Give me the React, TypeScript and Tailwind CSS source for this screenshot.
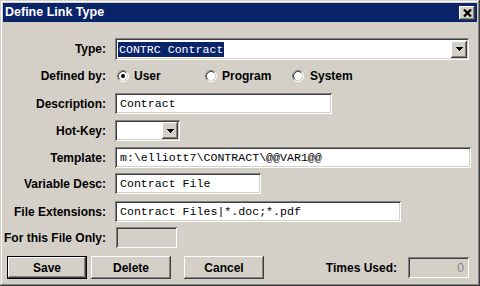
import React from 'react';

const sunken =
  'shadow-[inset_1px_1px_0_#808080,inset_-1px_-1px_0_#ffffff,inset_2px_2px_0_#404040,inset_-2px_-2px_0_#d4d0c8]';
const raised =
  'shadow-[inset_-1px_-1px_0_#404040,inset_1px_1px_0_#ffffff,inset_-2px_-2px_0_#808080,inset_2px_2px_0_#d4d0c8]';
const frame =
  'shadow-[inset_-1px_-1px_0_#404040,inset_1px_1px_0_#d4d0c8,inset_-2px_-2px_0_#808080,inset_2px_2px_0_#ffffff]';

const labelFont = "font-['Liberation_Sans',Arial,sans-serif] font-bold text-[12px] text-black";
const monoFont = "font-['Liberation_Mono','Courier_New',monospace] text-[11.6px] text-black";

const DownArrow = () => (
  <svg width="7" height="4" viewBox="0 0 7 4" shapeRendering="crispEdges">
    <rect x="0" y="0" width="7" height="1" fill="#000" />
    <rect x="1" y="1" width="5" height="1" fill="#000" />
    <rect x="2" y="2" width="3" height="1" fill="#000" />
    <rect x="3" y="3" width="1" height="1" fill="#000" />
  </svg>
);

const DropButton = () => (
  <div className={`w-[16px] h-[17px] bg-[#d4d0c8] flex items-center justify-center ${raised}`}>
    <DownArrow />
  </div>
);

const Radio = ({ checked }: { checked?: boolean }) => (
  <svg width="12" height="12" viewBox="0 0 12 12">
    <circle cx="6" cy="6" r="4.5" fill="#fff" />
    <path d="M2.11 9.89 A5.5 5.5 0 0 1 9.89 2.11" stroke="#808080" strokeWidth="1" fill="none" />
    <path d="M9.89 2.11 A5.5 5.5 0 0 1 2.11 9.89" stroke="#ffffff" strokeWidth="1" fill="none" />
    <path d="M2.82 9.18 A4.5 4.5 0 0 1 9.18 2.82" stroke="#404040" strokeWidth="1" fill="none" />
    <path d="M9.18 2.82 A4.5 4.5 0 0 1 2.82 9.18" stroke="#d4d0c8" strokeWidth="1" fill="none" />
    {checked && <circle cx="6" cy="6" r="2" fill="#000" />}
  </svg>
);

const Label = ({ children }: { children: React.ReactNode }) => (
  <div className={`w-[103px] shrink-0 text-right ${labelFont}`}>{children}</div>
);

const Field = ({ width, value }: { width: string; value: string }) => (
  <div className={`${width} h-[21px] ml-[9px] bg-white flex items-center pl-[5px] ${sunken}`}>
    <span className={`${monoFont} whitespace-pre`}>{value}</span>
  </div>
);

const WinButton = ({ label, isDefault }: { label: string; isDefault?: boolean }) =>
  isDefault ? (
    <div className="w-[80px] h-[23px] border border-black">
      <div className={`w-full h-full bg-[#d4d0c8] flex items-center justify-center ${raised} ${labelFont}`}>
        {label}
      </div>
    </div>
  ) : (
    <div className={`w-[80px] h-[23px] bg-[#d4d0c8] flex items-center justify-center ${raised} ${labelFont}`}>
      {label}
    </div>
  );

export default function App() {
  return (
    <div className={`w-[480px] h-[286px] bg-[#d4d0c8] p-[3px] flex flex-col ${frame}`}>
      {/* Title bar */}
      <div className="h-[19px] bg-[#0a246a] flex items-center justify-between pl-[2px] pr-[2px]">
        <span className="font-['Liberation_Sans',Arial,sans-serif] font-bold text-[12.5px] text-white">
          Define Link Type
        </span>
        <div className={`w-[16px] h-[14px] bg-[#d4d0c8] flex items-center justify-center ${raised}`}>
          <svg width="9" height="8" viewBox="0 0 9 8">
            <path d="M1 0.5 L8 7.5 M8 0.5 L1 7.5" stroke="#000" strokeWidth="2.2" />
          </svg>
        </div>
      </div>

      {/* Type */}
      <div className="flex items-center mt-[16px]">
        <Label>Type:</Label>
        <div className={`w-[354px] h-[22px] ml-[9px] bg-white flex items-center justify-between pl-[3px] pr-[2px] ${sunken}`}>
          <span className={`${monoFont} bg-[#0a246a] text-white leading-[15px] px-[1px] whitespace-pre`}>
            CONTRC Contract
          </span>
          <DropButton />
        </div>
      </div>

      {/* Defined by */}
      <div className="flex items-center h-[20px] mt-[6px]">
        <Label>Defined by:</Label>
        <div className="flex items-center ml-[11px]">
          <div className="w-[88px] flex items-center gap-[5px]">
            <Radio checked />
            <span className={labelFont}>User</span>
          </div>
          <div className="w-[87px] flex items-center gap-[5px]">
            <Radio />
            <span className={labelFont}>Program</span>
          </div>
          <div className="flex items-center gap-[6px]">
            <Radio />
            <span className={labelFont}>System</span>
          </div>
        </div>
      </div>

      {/* Description */}
      <div className="flex items-center mt-[7px]">
        <Label>Description:</Label>
        <Field width="w-[217px]" value="Contract" />
      </div>

      {/* Hot-Key */}
      <div className="flex items-center mt-[6px]">
        <Label>Hot-Key:</Label>
        <div className={`w-[65px] h-[21px] ml-[9px] bg-white flex items-center justify-end pr-[2px] ${sunken}`}>
          <DropButton />
        </div>
      </div>

      {/* Template */}
      <div className="flex items-center mt-[6px]">
        <Label>Template:</Label>
        <Field width="w-[356px]" value={'m:\\elliott7\\CONTRACT\\@@VAR1@@'} />
      </div>

      {/* Variable Desc */}
      <div className="flex items-center mt-[5px]">
        <Label>Variable Desc:</Label>
        <Field width="w-[146px]" value="Contract File" />
      </div>

      {/* File Extensions */}
      <div className="flex items-center mt-[7px]">
        <Label>File Extensions:</Label>
        <Field width="w-[286px]" value="Contract Files|*.doc;*.pdf" />
      </div>

      {/* For this File Only */}
      <div className="flex items-center mt-[5px]">
        <Label>For this File Only:</Label>
        <div className={`w-[61px] h-[21px] ml-[10px] bg-[#d4d0c8] ${sunken}`} />
      </div>

      {/* Buttons */}
      <div className="flex items-center mt-[8px] pl-[4px]">
        <WinButton label="Save" isDefault />
        <div className="ml-[4px]">
          <WinButton label="Delete" />
        </div>
        <div className="ml-[13px]">
          <WinButton label="Cancel" />
        </div>
        <span className={`ml-auto ${labelFont}`}>Times Used:</span>
        <div className={`w-[61px] h-[21px] ml-[11px] mr-[8px] bg-[#d4d0c8] flex items-center justify-end pr-[5px] ${sunken}`}>
          <span className="font-['Liberation_Sans',Arial,sans-serif] text-[12px] text-[#808080]">0</span>
        </div>
      </div>
    </div>
  );
}
